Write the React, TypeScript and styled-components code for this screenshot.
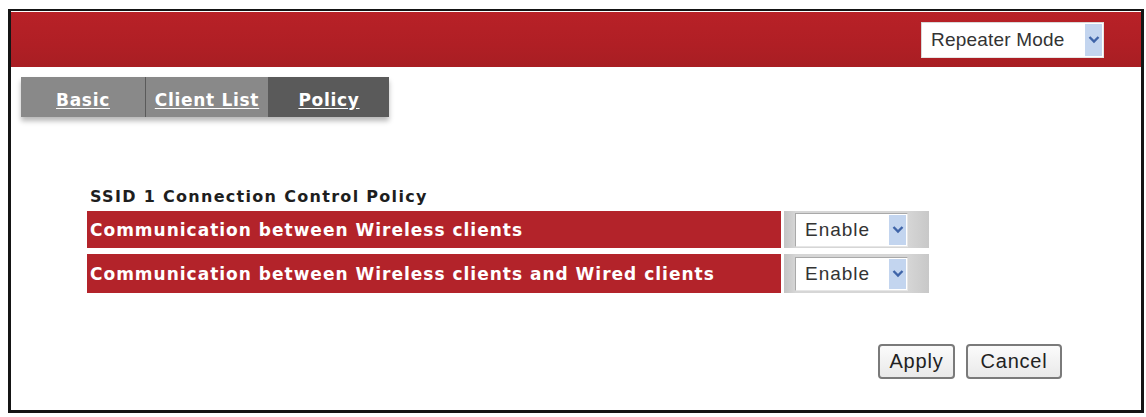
import styled, { createGlobalStyle } from "styled-components";

const GlobalStyle = createGlobalStyle`
  html, body {
    margin: 0;
    padding: 0;
    background: #ffffff;
  }
`;

const rows = [
  "Communication between Wireless clients",
  "Communication between Wireless clients and Wired clients",
];

const tabs = [
  { label: "Basic", width: 124, active: false },
  { label: "Client List", width: 123, active: false },
  { label: "Policy", width: 121, active: true },
];

const Chevron = () => (
  <svg width="12" height="9" viewBox="0 0 12 9">
    <path d="M1.5 2 L6 6.5 L10.5 2" fill="none" stroke="#3f64a8" strokeWidth="2.4" />
  </svg>
);

const App = () => {
  return (
    <>
      <GlobalStyle />
      <Frame>
        <Header>
          <Dropdown $width={183} $height={36}>
            <DropdownText $size={19} $spacing={0.2}>Repeater Mode</DropdownText>
            <ArrowBox>
              <Chevron />
            </ArrowBox>
          </Dropdown>
        </Header>

        <TabBar>
          {tabs.map((t) => (
            <Tab key={t.label} $width={t.width} $active={t.active}>
              <TabLink>{t.label}</TabLink>
            </Tab>
          ))}
        </TabBar>

        <Content>
          <SectionTitle>SSID 1 Connection Control Policy</SectionTitle>
          <PolicyGrid>
            {rows.map((r, i) => (
              <PolicyRow key={r} $height={i === 0 ? 37 : 39}>
                <LabelCell>{r}</LabelCell>
                <ValueCell>
                  <Dropdown $width={113} $height={34} $inset>
                    <DropdownText $size={19} $spacing={1}>Enable</DropdownText>
                    <ArrowBox>
                      <Chevron />
                    </ArrowBox>
                  </Dropdown>
                </ValueCell>
              </PolicyRow>
            ))}
          </PolicyGrid>
        </Content>

        <Footer>
          <Button $width={77}>Apply</Button>
          <Button $width={96}>Cancel</Button>
        </Footer>
      </Frame>
    </>
  );
};

export default App;

const Frame = styled.div`
  margin: 9px 0 0 8px;
  width: 1136px;
  height: 404px;
  box-sizing: border-box;
  border: 3px solid #151515;
  border-top-width: 2px;
  display: flex;
  flex-direction: column;
  background: #ffffff;
`;

const Header = styled.div`
  height: 55px;
  margin-top: 1px;
  background: linear-gradient(#b82127, #b01f25 60%, #a81e23);
  display: flex;
  justify-content: flex-end;
  align-items: center;
  padding-right: 37px;
  box-sizing: border-box;
`;

const Dropdown = styled.div<{ $width: number; $height: number; $inset?: boolean }>`
  width: ${(p) => p.$width}px;
  height: ${(p) => p.$height}px;
  box-sizing: border-box;
  background: #ffffff;
  border: 1px solid ${(p) => (p.$inset ? "#a9a9a9" : "#d8d8d8")};
  border-right-color: #e6e6e6;
  border-bottom-color: #e6e6e6;
  display: flex;
  align-items: stretch;
  padding: 1px;
`;

const DropdownText = styled.div<{ $size: number; $spacing: number }>`
  flex: 1;
  display: flex;
  align-items: center;
  padding-left: 8px;
  font-family: "Liberation Sans", Arial, sans-serif;
  font-size: ${(p) => p.$size}px;
  letter-spacing: ${(p) => p.$spacing}px;
  color: #333333;
  white-space: nowrap;
`;

const ArrowBox = styled.div`
  width: 17px;
  background: #c3d5ef;
  display: flex;
  align-items: center;
  justify-content: center;
`;

const TabBar = styled.div`
  display: flex;
  align-self: flex-start;
  margin: 10px 0 0 10px;
  height: 40px;
  box-shadow: 0 4px 5px rgba(0, 0, 0, 0.28);
`;

const Tab = styled.div<{ $width: number; $active: boolean }>`
  width: ${(p) => p.$width}px;
  background: ${(p) => (p.$active ? "#5a5a5a" : "#898989")};
  display: flex;
  align-items: center;
  justify-content: center;
  padding-top: 6px;
  box-sizing: border-box;
  & + & {
    border-left: 1px solid ${(p) => (p.$active ? "#5a5a5a" : "#a8a8a8")};
  }
`;

const TabLink = styled.span`
  font-family: "DejaVu Sans", Verdana, sans-serif;
  font-weight: bold;
  font-size: 17px;
  color: #ffffff;
  text-decoration: underline;
  text-underline-offset: 2px;
  letter-spacing: 0.7px;
`;

const Content = styled.div`
  padding: 71px 0 0 76px;
`;

const SectionTitle = styled.div`
  font-family: "DejaVu Sans", Verdana, sans-serif;
  font-weight: bold;
  font-size: 16px;
  line-height: 18px;
  color: #1e1e1e;
  margin-bottom: 5px;
  padding-left: 3px;
  letter-spacing: 1.3px;
`;

const PolicyGrid = styled.div`
  display: flex;
  flex-direction: column;
  gap: 6px;
`;

const PolicyRow = styled.div<{ $height: number }>`
  display: flex;
  gap: 3px;
  height: ${(p) => p.$height}px;
`;

const LabelCell = styled.div`
  width: 694px;
  background: #b3232a;
  color: #ffffff;
  font-family: "DejaVu Sans", Verdana, sans-serif;
  font-weight: bold;
  font-size: 17px;
  letter-spacing: 1px;
  display: flex;
  align-items: center;
  padding-left: 3px;
  box-sizing: border-box;
  white-space: nowrap;
`;

const ValueCell = styled.div`
  width: 145px;
  background: linear-gradient(90deg, #c4c4c4, #d6d6d6 8%, #d6d6d6 85%, #c8c8c8);
  display: flex;
  align-items: center;
  padding-left: 11px;
  box-sizing: border-box;
`;

const Footer = styled.div`
  display: flex;
  justify-content: flex-end;
  gap: 11px;
  padding: 51px 79px 0 0;
`;

const Button = styled.button<{ $width: number }>`
  width: ${(p) => p.$width}px;
  height: 35px;
  border: 2px solid #7a7a7a;
  border-radius: 4px;
  background: linear-gradient(#fbfbfb, #e9e9e9);
  font-family: "Liberation Sans", Arial, sans-serif;
  font-size: 20px;
  letter-spacing: 0.8px;
  color: #222222;
  padding: 0;
  cursor: pointer;
`;
